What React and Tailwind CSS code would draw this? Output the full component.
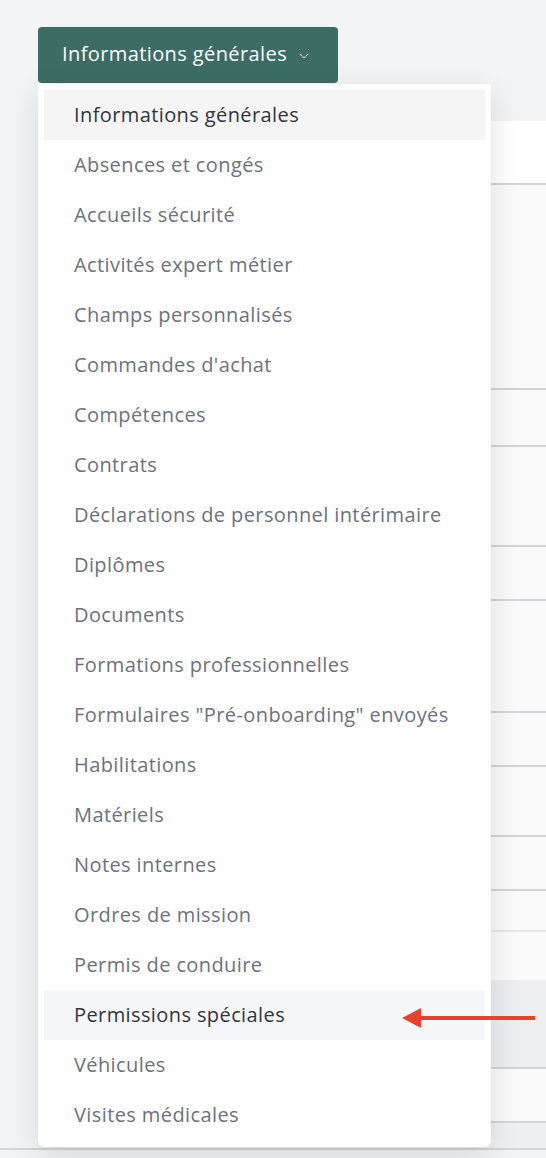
import React from 'react'
import { ChevronDown } from 'lucide-react'

const items = [
  'Informations générales',
  'Absences et congés',
  'Accueils sécurité',
  'Activités expert métier',
  'Champs personnalisés',
  "Commandes d'achat",
  'Compétences',
  'Contrats',
  'Déclarations de personnel intérimaire',
  'Diplômes',
  'Documents',
  'Formations professionnelles',
  'Formulaires "Pré-onboarding" envoyés',
  'Habilitations',
  'Matériels',
  'Notes internes',
  'Ordres de mission',
  'Permis de conduire',
  'Permissions spéciales',
  'Véhicules',
  'Visites médicales',
]

// rows of the table behind the menu (only the right edge shows)
const rows = [
  { h: 'h-[62px]', cls: 'bg-white' },
  { h: 'h-[205px]', cls: 'border-t-2 border-[#d1d5db] bg-[#fafafa]' },
  { h: 'h-[57px]', cls: 'border-t-2 border-[#d1d5db] bg-[#fafafa]' },
  { h: 'h-[100px]', cls: 'border-t-2 border-[#d1d5db] bg-[#fafafa]' },
  { h: 'h-[54px]', cls: 'border-t-2 border-[#d1d5db] bg-[#fafafa]' },
  { h: 'h-[112px]', cls: 'border-t-2 border-[#d1d5db] bg-[#fafafa]' },
  { h: 'h-[54px]', cls: 'border-t-2 border-[#d1d5db] bg-[#fafafa]' },
  { h: 'h-[70px]', cls: 'border-t-2 border-[#d1d5db] bg-[#fafafa]' },
  { h: 'h-[54px]', cls: 'border-t-2 border-[#d1d5db] bg-[#fafafa]' },
  { h: 'h-[41px]', cls: 'border-t-2 border-[#d1d5db] bg-[#fafafa]' },
  { h: 'h-[50px]', cls: 'border-t-2 border-[#e5e7eb] bg-[#fafafa]' },
  { h: 'h-[87px]', cls: 'bg-[#eceef1]' },
  { h: 'h-[54px]', cls: 'border-t-2 border-[#d1d5db] bg-[#fafafa]' },
  { h: 'h-[27px]', cls: 'border-t-2 border-[#d1d5db] bg-[#eef0f2]' },
]

const App = () => {
  return (
    <div
      className="relative w-[546px] h-[1158px] overflow-hidden bg-[#f3f4f6]"
      style={{ fontFamily: '"Open Sans", Lato, sans-serif' }}
    >
      <div className="pt-[27px] pl-[38px]">
        <button className="flex items-center gap-[9px] w-[300px] h-[56px] pl-[24px] pb-[3px] bg-[#3b6d64] text-white text-[20px] tracking-[0.4px] rounded-[4px]">
          Informations générales
          <ChevronDown size={16} strokeWidth={1.5} className="mt-[4px]" />
        </button>
      </div>

      {/* table behind */}
      <div className="mt-[38px] ml-[38px] flex flex-col">
        {rows.map((r, i) => (
          <div key={i} className={`${r.h} ${r.cls}`} />
        ))}
      </div>
      <div className="border-t-2 border-[#d1d5db]" />

      {/* dropdown menu */}
      <div className="absolute left-[38px] top-[84px] w-[453px] bg-white rounded-b-[6px] rounded-tr-[4px] shadow-[0_8px_30px_rgba(0,0,0,0.12)] px-[6px] pt-[6px] pb-[7px]">
        {items.map((item, index) => (
          <div
            key={index}
            className={
              'h-[50px] flex items-center pl-[30px] text-[20px] tracking-[0.4px] ' +
              (index === 0
                ? 'bg-[#f5f5f5] text-[#2f3542]'
                : index === 18
                ? 'bg-[#f6f7f9] text-[#2f3542]'
                : 'text-[#6b7280]')
            }
          >
            {item}
          </div>
        ))}
      </div>

      {/* annotation arrow */}
      <svg className="absolute left-[400px] top-[1006px]" width="140" height="24" viewBox="0 0 140 24">
        <line x1="18" y1="12" x2="135" y2="12" stroke="#e8412c" strokeWidth="4" />
        <polygon points="2,12 21,2 21,22" fill="#e8412c" />
      </svg>
    </div>
  )
}

export default App
